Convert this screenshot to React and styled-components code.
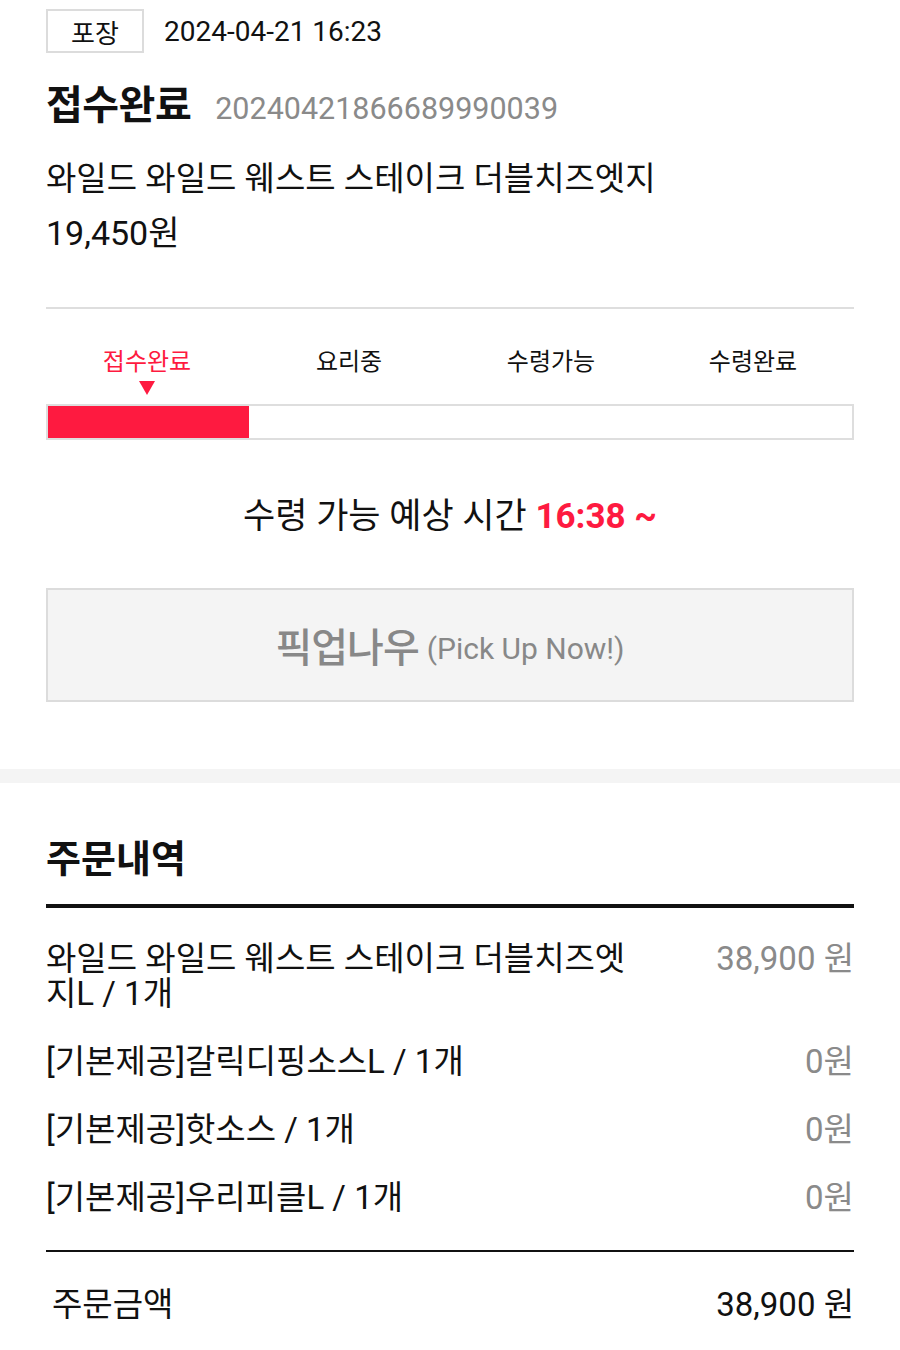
import React from 'react';
import styled, { createGlobalStyle } from 'styled-components';

const RED = '#fe1a40';

const GlobalStyle = createGlobalStyle`
  body {
    margin: 0;
    background: #fff;
    color: #111;
    font-family: Roboto, "Noto Sans CJK KR", sans-serif;
  }
`;

const Page = styled.div`
  width: 900px;
  background: #fff;
`;

const Section = styled.section`
  padding: ${(p) => p.$pad || '0 46px'};
`;

const HeadRow = styled.div`
  display: flex;
  align-items: center;
  gap: 20px;
  height: 44px;
`;

const Badge = styled.span`
  box-sizing: border-box;
  width: 98px;
  height: 44px;
  border: 2px solid #dcdcdc;
  display: flex;
  align-items: center;
  justify-content: center;
  font-size: 26px;
`;

const DateText = styled.span`
  font-size: 28px;
`;

const TitleRow = styled.div`
  display: flex;
  align-items: baseline;
  gap: 24px;
  margin-top: 28px;
  line-height: 50px;
`;

const Status = styled.h1`
  margin: 0;
  font-size: 40px;
  font-weight: 700;
  letter-spacing: -0.5px;
`;

const OrderNo = styled.span`
  font-size: 30.5px;
  color: #8a8a8a;
`;

const ProductName = styled.div`
  margin-top: 17px;
  font-size: 33px;
  line-height: 55px;
`;

const Price = styled.div`
  font-size: 34px;
  line-height: 55px;
`;

const Divider = styled.hr`
  margin: 46px 0 0;
  border: none;
  border-top: 2px solid #dedede;
`;

const Steps = styled.div`
  display: grid;
  grid-template-columns: repeat(4, 1fr);
  margin-top: 38px;
`;

const Step = styled.div`
  display: flex;
  flex-direction: column;
  align-items: center;
  font-size: 24px;
  line-height: 30px;
  color: ${(p) => (p.$active ? RED : '#111')};
`;

const Pointer = styled.span`
  margin-top: 4px;
  width: 0;
  height: 0;
  border-left: 8px solid transparent;
  border-right: 8px solid transparent;
  border-top: 14px solid ${(p) => (p.$show ? RED : 'transparent')};
`;

const Bar = styled.div`
  box-sizing: border-box;
  margin-top: 9px;
  height: 36px;
  border: 2px solid #dedede;
  background: #fff;
`;

const Fill = styled.div`
  height: 100%;
  background: ${RED};
`;

const Eta = styled.p`
  margin: 57px 0 0;
  text-align: center;
  font-size: 35px;
  line-height: 40px;
  strong {
    color: ${RED};
    font-weight: 700;
  }
`;

const PickupButton = styled.button`
  box-sizing: border-box;
  display: flex;
  align-items: center;
  justify-content: center;
  gap: 8px;
  width: 100%;
  height: 114px;
  margin-top: 51px;
  background: #f4f4f4;
  border: 2px solid #dcdcdc;
  color: #888;
  font-family: inherit;
  cursor: pointer;
  .ko {
    font-size: 40px;
    font-weight: 500;
    letter-spacing: -1px;
  }
  .en {
    font-size: 30px;
    margin-top: 6px;
  }
`;

const Band = styled.div`
  height: 14px;
  margin-top: 67px;
  background: #f4f4f4;
`;

const SectionTitle = styled.h2`
  margin: 51px 0 0;
  font-size: 38px;
  font-weight: 700;
  line-height: 50px;
`;

const Rule = styled.hr`
  margin: ${(p) => p.$margin};
  border: none;
  border-top: ${(p) => p.$weight}px solid #111;
`;

const Items = styled.ul`
  list-style: none;
  margin: 0;
  padding: 33px 0 0;
  display: flex;
  flex-direction: column;
  gap: 33px;
`;

const Item = styled.li`
  display: flex;
  justify-content: space-between;
  align-items: flex-start;
  gap: 40px;
  font-size: 33px;
  line-height: 35px;
`;

const ItemName = styled.span`
  flex: 0 1 596px;
`;

const ItemPrice = styled.span`
  flex: none;
  color: #8a8a8a;
  font-size: 33px;
`;

const TotalRow = styled.div`
  display: flex;
  justify-content: space-between;
  align-items: center;
  padding: 33px 0 40px 6px;
  line-height: 40px;
`;

const TotalLabel = styled.span`
  font-size: 33px;
`;

const TotalPrice = styled.span`
  font-size: 33px;
`;

const steps = ['접수완료', '요리중', '수령가능', '수령완료'];

const items = [
  { name: '와일드 와일드 웨스트 스테이크 더블치즈엣지L / 1개', price: '38,900 원' },
  { name: '[기본제공]갈릭디핑소스L / 1개', price: '0원' },
  { name: '[기본제공]핫소스 / 1개', price: '0원' },
  { name: '[기본제공]우리피클L / 1개', price: '0원' },
];

export default function App() {
  const current = 0;
  return (
    <Page>
      <GlobalStyle />
      <Section $pad="9px 46px 0">
        <HeadRow>
          <Badge>포장</Badge>
          <DateText>2024-04-21 16:23</DateText>
        </HeadRow>
        <TitleRow>
          <Status>접수완료</Status>
          <OrderNo>20240421866689990039</OrderNo>
        </TitleRow>
        <ProductName>와일드 와일드 웨스트 스테이크 더블치즈엣지</ProductName>
        <Price>19,450원</Price>
        <Divider />
        <Steps>
          {steps.map((s, i) => (
            <Step key={s} $active={i === current}>
              {s}
              <Pointer $show={i === current} />
            </Step>
          ))}
        </Steps>
        <Bar>
          <Fill style={{ width: `${((current + 1) / steps.length) * 100}%` }} />
        </Bar>
        <Eta>
          수령 가능 예상 시간 <strong>16:38 ~</strong>
        </Eta>
        <PickupButton type="button">
          <span className="ko">픽업나우</span>
          <span className="en">(Pick Up Now!)</span>
        </PickupButton>
      </Section>
      <Band />
      <Section>
        <SectionTitle>주문내역</SectionTitle>
        <Rule $weight={4} $margin="20px 0 0" />
        <Items>
          {items.map((it) => (
            <Item key={it.name}>
              <ItemName>{it.name}</ItemName>
              <ItemPrice>{it.price}</ItemPrice>
            </Item>
          ))}
        </Items>
        <Rule $weight={2} $margin="35px 0 0" />
        <TotalRow>
          <TotalLabel>주문금액</TotalLabel>
          <TotalPrice>38,900 원</TotalPrice>
        </TotalRow>
      </Section>
    </Page>
  );
}
